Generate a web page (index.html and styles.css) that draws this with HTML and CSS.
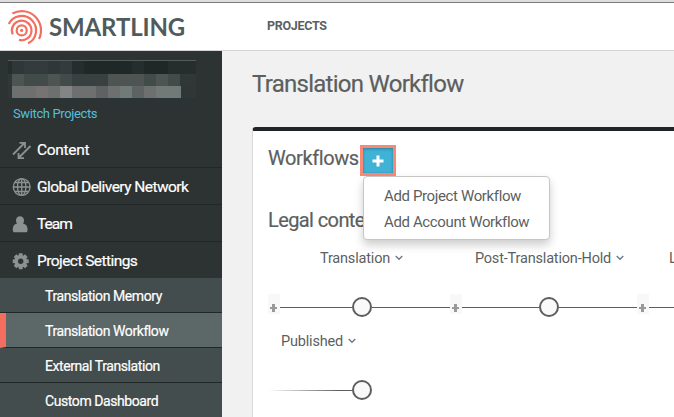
FILE: index.html
```
<!DOCTYPE html>
<html lang="en">
<head>
<meta charset="utf-8">
<title>Translation Workflow</title>
<link rel="stylesheet" href="styles.css">
</head>
<body>
<header class="topbar">
  <svg class="logo-mark" width="38" height="42" viewBox="0 0 38 42">
    <g transform="translate(15.7 21.4)" fill="none" stroke="#f26f60" stroke-width="2.2">
      <circle r="1.6" fill="#f26f60" stroke="none"/>
      <circle r="5"/>
      <path d="M-9 4A9.8 9.8 0 1 1-2.700 9.500"/>
      <path d="M-12.900-6.400A14.400 14.400 0 1 1 6.300 12.950"/>
      <path d="M-9.300-16.900A19.300 19.300 0 0 1 17.300 8.600"/>
    </g>
  </svg>
  <span class="logo-name">SMARTLING</span>
  <nav class="topnav">PROJECTS</nav>
</header>
<div class="body">
  <aside class="sidebar">
    <div class="account">
      <svg class="mosaic" width="188" height="41" viewBox="0 0 188 41" shape-rendering="crispEdges">
        <path fill="#555b5a" d="M0 0h188v1H0z"/>
        <path fill="#252d2d" d="M0 1h188v13H0z"/><path fill="#303739" d="M4 1h12v13H4zM40 1h12v13H40z"/><path fill="#343b3c" d="M16 1h24v13H16zM52 1h12v13H52z"/><path fill="#1f2727" d="M76 1h48v13H76zM136 1h24v13H136z"/>
        <path fill="#303737" d="M0 14h188v12H0z"/><path fill="#4e5452" d="M4 14h12v12H4zM40 14h12v12H40zM100 14h36v12H100zM148 14h12v12H148z"/><path fill="#414b4a" d="M16 14h24v12H16zM52 14h12v12H52zM136 14h12v12H136zM160 14h12v12H160z"/><path fill="#394140" d="M64 14h36v12H64z"/>
        <path fill="#303535" d="M0 26h188v12H0z"/><path fill="#6e706f" d="M4 26h169v12H4z"/><path fill="#777373" d="M28 26h12v12H28z"/><path fill="#838485" d="M52 26h12v12H52z"/><path fill="#5e6263" d="M88 26h12v12H88zM124 26h12v12H124z"/><path fill="#717a77" d="M112 26h12v12H112zM148 26h25v12H148z"/>
        <path fill="#2b3435" d="M4 38h180v3H4z"/>
      </svg>
      <a class="switch">Switch Projects</a>
    </div>
    <ul class="nav">
      <li><svg class="icon" width="20" height="20" viewBox="0 0 20 20" fill="none" stroke="#8b9291" stroke-width="1.8"><path d="M1 14.500L12.500 3M7.500 2.800H13V8M18.500 6L7 17.500M6.500 13V18.200H12"/></svg><span class="t-content">Content</span></li>
      <li><svg class="icon" width="20" height="20" viewBox="0 0 20 20" fill="none" stroke="#8b9291" stroke-width="1.3"><circle cx="9.700" cy="10" r="8.400"/><ellipse cx="9.700" cy="10" rx="4.200" ry="8.400"/><path d="M9.700 1.500V18.500M1.200 10H18.200M2.800 5.500H16.600M2.800 14.500H16.600"/></svg><span class="t-gdn">Global Delivery Network</span></li>
      <li><svg class="icon" width="20" height="20" viewBox="0 0 20 20" fill="#8b9291"><path d="M8 2.200c2.500 0 4 1.900 4 4.300 0 1.200-.4 2.300-1 3 2.800.5 4.500 2.400 4.500 5.500v1.500c0 1-.6 1.800-1.800 1.800H2.600C1.500 18.300.8 17.500.8 16.500V15c0-3.100 1.500-5 4.200-5.500-.6-.7-1-1.800-1-3C4 4.100 5.500 2.200 8 2.200z"/></svg><span class="t-team">Team</span></li>
      <li><svg class="icon" width="20" height="20" viewBox="0 0 20 20"><g fill="#8b9291" transform="translate(8.700 10.300)"><path d="M-1.800-8h3.600l.5 3.500h-4.600zM-1.800 8h3.600l.5-3.500h-4.600z"/><path d="M-1.800-8h3.600l.5 3.500h-4.600zM-1.800 8h3.600l.5-3.500h-4.600z" transform="rotate(45)"/><path d="M-1.800-8h3.600l.5 3.500h-4.600zM-1.800 8h3.600l.5-3.500h-4.600z" transform="rotate(90)"/><path d="M-1.800-8h3.600l.5 3.500h-4.600zM-1.800 8h3.600l.5-3.500h-4.600z" transform="rotate(135)"/></g><circle cx="8.700" cy="10.300" r="4.400" fill="none" stroke="#8b9291" stroke-width="3.400"/></svg><span class="t-settings">Project Settings</span></li>
    </ul>
    <ul class="subnav">
      <li>Translation Memory</li>
      <li class="active">Translation Workflow</li>
      <li>External Translation</li>
      <li>Custom Dashboard</li>
    </ul>
  </aside>
  <main class="main">
    <h1>Translation Workflow</h1>
    <section class="panel">
      <div class="panel-head">
        <h2>Workflows</h2>
        <div class="add-wrap">
          <button class="add" aria-label="Add"><svg width="12" height="12" viewBox="0 0 12 12"><path fill="#fff" d="M4.500.5h3v4h4v3h-4v4h-3v-4h-4v-3h4z"/></svg></button>
          <ul class="menu">
            <li>Add Project Workflow</li>
            <li>Add Account Workflow</li>
          </ul>
        </div>
      </div>
      <h3>Legal content</h3>
      <div class="flow">
        <div class="step first">
          <div class="label"><span>Translation</span><svg class="chev" width="8" height="6" viewBox="0 0 8 6"><path d="M.7 1L4 4.300 7.300 1"/></svg></div>
          <div class="track"><i class="plus"></i><i class="line"></i><i class="node"></i><i class="line"></i></div>
        </div>
        <div class="step second">
          <div class="label"><span>Post-Translation-Hold</span><svg class="chev" width="8" height="6" viewBox="0 0 8 6"><path d="M.7 1L4 4.300 7.300 1"/></svg></div>
          <div class="track"><i class="plus"></i><i class="line"></i><i class="node"></i><i class="line"></i></div>
        </div>
        <div class="step third">
          <div class="label"><span>L</span></div>
          <div class="track"><i class="plus"></i><i class="line"></i></div>
        </div>
      </div>
      <div class="step last">
        <div class="label"><span>Published</span><svg class="chev" width="8" height="6" viewBox="0 0 8 6"><path d="M.7 1L4 4.300 7.300 1"/></svg></div>
        <div class="track"><i class="line fade"></i><i class="node"></i></div>
      </div>
    </section>
  </main>
</div>
</body>
</html>
```
FILE: styles.css
```
* { box-sizing: border-box; }
body {
  margin: 0;
  width: 674px;
  height: 417px;
  overflow: hidden;
  background: #f1f1f1;
  color: #5c5f5f;
  font-family: Roboto, "Liberation Sans", sans-serif;
}
ul { list-style: none; margin: 0; padding: 0; }
h1, h2, h3 { margin: 0; font-weight: 400; white-space: nowrap; -webkit-text-stroke: .2px; }

.topbar {
  display: flex;
  height: 51px;
  padding: 4px 0 0 6px;
  background: #fff;
  border-bottom: 1px solid #d5d5d5;
  box-shadow: inset 0 2px #dedede, inset 0 3px #7a7a7a;
}
.logo-mark { margin: 5px 0 0 0; flex: none; }
.logo-name {
  flex: none;
  width: 223px;
  padding-left: 5px;
  font: 700 24px/46px Lato, sans-serif;
  letter-spacing: -.15px;
  color: #515b5b;
}
.topnav { font-weight: 700; font-size: 12.5px; line-height: 44px; letter-spacing: -.3px; }

.body { display: flex; height: 366px; }
.sidebar { width: 222px; height: 366px; overflow: hidden; flex: none; background: #2d3333; color: #fff; }
.account { height: 80px; padding: 9px 0 0 8px; }
.mosaic { display: block; }
.switch { display: block; margin: 3px 0 0 5px; font-size: 13px; line-height: 20px; letter-spacing: -.37px; color: #56bfdc; }
.nav li {
  display: flex;
  align-items: center;
  height: 37px;
  padding: 2px 0 0 12px;
  font-size: 15.5px;
  white-space: nowrap;
  border-bottom: 1px solid #202727;
  -webkit-text-stroke: .2px;
}
.nav li:last-child { border-bottom: 0; height: 36px; }
.nav .icon { margin-right: 5px; flex: none; }
.t-content { letter-spacing: -.3px; }
.t-gdn { letter-spacing: -.55px; }
.t-team { letter-spacing: -1px; }
.t-settings { letter-spacing: -.56px; }
.subnav li {
  height: 35px;
  padding-left: 45px;
  background: #444d4d;
  border-bottom: 1px solid #202727;
  font-size: 14px;
  line-height: 36px;
  letter-spacing: -.42px;
  -webkit-text-stroke: .2px;
}
.subnav .active { background: #5c6768; border-left: 6px solid #f26f60; padding-left: 39px; }

.main { flex: 1; padding: 18px 0 0 30px; min-width: 0; }
h1 { font-size: 24px; line-height: 30px; height: 58px; letter-spacing: -.73px; }
.panel {
  width: 422px;
  height: 290px;
  padding: 0 0 0 15px;
  background: #fff;
  border-left: 1px solid #d8d8d8;
  border-top: 4px solid #202427;
  border-radius: 4px 0 0 0;
}
.panel-head { display: flex; height: 75px; padding-top: 14px; }
h2 { width: 92px; font-size: 20px; line-height: 27px; letter-spacing: -.4px; }
.add-wrap { position: relative; height: 31px; }
.add {
  display: flex;
  align-items: center;
  justify-content: center;
  width: 36px;
  height: 31px;
  padding: 0;
  border: 3px solid #f78a75;
  background: #3fb2d6;
  box-shadow: inset 0 1px 3px #28819c;
}
.menu {
  position: absolute;
  left: 3px;
  top: 31px;
  width: 187px;
  height: 64px;
  padding: 6px 0 0 20px;
  background: #fff;
  border: 1px solid #c6c6c6;
  border-radius: 4px;
  box-shadow: 0 5px 10px rgba(0,0,0,.2);
  font-size: 15px;
  line-height: 26px;
  letter-spacing: -.37px;
  white-space: nowrap;
}
h3 { font-size: 20px; line-height: 28px; height: 42px; letter-spacing: -.6px; }
.flow { display: flex; height: 83px; }
.step { flex: none; }
.first { width: 182px; }
.second { width: 187px; }
.third { width: 37px; }
.last { width: 104px; }
.label {
  display: flex;
  align-items: center;
  justify-content: center;
  height: 20px;
  font-size: 14.500px;
  letter-spacing: -.18px;
  white-space: nowrap;
}
.first .label { padding-left: 5px; }
.second .label { padding-left: 12px; }
.third .label { justify-content: flex-start; padding-left: 32px; overflow: hidden; }
.last .label { justify-content: flex-start; padding-left: 13px; }
.chev { margin: 0 0 0 5px; fill: none; stroke: #6d7a88; stroke-width: 1.4; }
.track { display: flex; align-items: center; height: 20px; margin-top: 29px; }
.plus {
  width: 12px;
  height: 20px;
  margin-top: -6px;
  background:
    linear-gradient(#999, #999) 2px 13px / 7px 2px no-repeat,
    linear-gradient(#999, #999) 4px 10px / 3px 8px no-repeat,
    #f8f8f8;
}
.line { flex: 1; height: 1px; background: #5e5e5e; }
.first .line:nth-child(2) { flex: 0 0 72px; }
.second .line:nth-child(2) { flex: 0 0 77px; }
.node { width: 20px; height: 20px; border: 2px solid #5e5e5e; border-radius: 50%; background: #f9f9f9; }
.fade { background: linear-gradient(90deg, transparent, #5e5e5e 85%); }
```
